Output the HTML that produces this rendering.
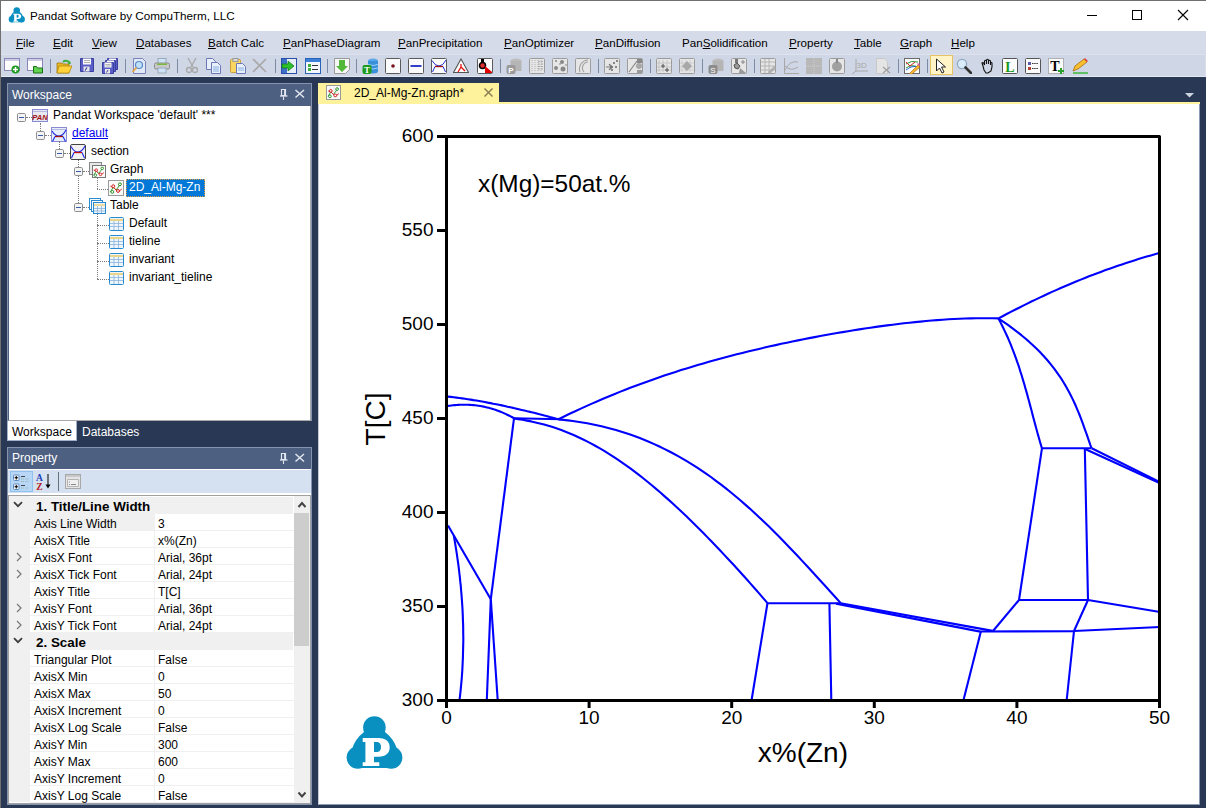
<!DOCTYPE html>
<html><head><meta charset="utf-8">
<style>
*{box-sizing:border-box}
html,body{margin:0;padding:0}
body{width:1206px;height:808px;position:relative;overflow:hidden;background:#293955;font-family:"Liberation Sans",sans-serif;font-size:12px;color:#000}
.a{position:absolute}
.t{position:absolute;white-space:nowrap;line-height:14px}
.mi{position:absolute;top:37px;white-space:nowrap;font-size:11.6px;line-height:12px;color:#000}
.mi u{text-decoration:underline;text-underline-offset:1px}
</style></head><body>
<!-- window frame -->
<div class="a" style="left:0;top:0;width:1206px;height:31px;background:#fff;border-top:1px solid #6f6f6f"></div>
<div class="a" style="left:0;top:0;width:1px;height:808px;background:#707070"></div>
<!-- title -->

<div class="t" style="left:30px;top:9px;font-size:11.7px;color:#000">Pandat Software by CompuTherm, LLC</div>
<!-- window buttons -->
<div class="a" style="left:1087px;top:15px;width:10px;height:1px;background:#000"></div>
<div class="a" style="left:1132px;top:10px;width:10px;height:10px;border:1px solid #000"></div>
<svg class="a" style="left:1177px;top:9px" width="12" height="12"><path d="M1 1 L11 11 M11 1 L1 11" stroke="#000" stroke-width="1.1"/></svg>

<!-- menu bar -->
<div class="a" style="left:1px;top:31px;width:1205px;height:23px;background:#d6dbe9"></div>
<div class="mi" style="left:16px"><u>F</u>ile</div>
<div class="mi" style="left:53px"><u>E</u>dit</div>
<div class="mi" style="left:92px"><u>V</u>iew</div>
<div class="mi" style="left:136px"><u>D</u>atabases</div>
<div class="mi" style="left:208px"><u>B</u>atch Calc</div>
<div class="mi" style="left:283px"><u>P</u>anPhaseDiagram</div>
<div class="mi" style="left:398px"><u>P</u>anPrecipitation</div>
<div class="mi" style="left:504px"><u>P</u>anOptimizer</div>
<div class="mi" style="left:595px"><u>P</u>anDiffusion</div>
<div class="mi" style="left:682px">Pan<u>S</u>olidification</div>
<div class="mi" style="left:789px"><u>P</u>roperty</div>
<div class="mi" style="left:854px"><u>T</u>able</div>
<div class="mi" style="left:900px"><u>G</u>raph</div>
<div class="mi" style="left:951px"><u>H</u>elp</div>

<!-- toolbar -->
<div class="a" style="left:1px;top:54px;width:1205px;height:23px;background:#cfd6e5;border-top:1px solid #dde2ee;border-bottom:1px solid #e4e8f1;border-right:1px solid #d8dde9"></div>
<svg class="a" style="left:4px;top:58px" width="16" height="16" viewBox="0 0 16 16"><rect x="0.5" y="0.5" width="15" height="12" fill="#fdfdfd" stroke="#8a86b8"/><rect x="1" y="1" width="14" height="2" fill="#cfcce6"/><circle cx="11.5" cy="11.5" r="4" fill="#1c9a1c"/><path d="M11.5 9v5M9 11.5h5" stroke="#fff" stroke-width="1.5"/></svg>
<svg class="a" style="left:27px;top:58px" width="16" height="16" viewBox="0 0 16 16"><rect x="0.5" y="0.5" width="15" height="12" fill="#fdfdfd" stroke="#8a86b8"/><rect x="1" y="1" width="14" height="2" fill="#cfcce6"/><path d="M6.5 8.5h3l1 1.5h5v5h-9z" fill="#62d050" stroke="#167016" stroke-width="1"/></svg>
<div class="a" style="left:50px;top:59px;width:1px;height:14px;background:#7d8aa5"></div>
<svg class="a" style="left:56px;top:58px" width="16" height="16" viewBox="0 0 16 16"><path d="M1 5h5l1 1h6v9H1z" fill="#e8b420" stroke="#a07a10" stroke-width="0.8"/><path d="M3 8h13l-3 7H1z" fill="#ffd23c" stroke="#b08a12" stroke-width="0.8"/><path d="M7 4a4 3 0 0 1 7 1" fill="none" stroke="#3cae3c" stroke-width="2"/><path d="M13 3l2 3-3 0z" fill="#3cae3c"/></svg>
<svg class="a" style="left:80px;top:58px" width="15" height="15" viewBox="0 0 15 15"><path d="M0.5 0.5h13v13h-13z" fill="#5a5fc8" stroke="#3a3e9e"/><rect x="3" y="0.5" width="8" height="6" fill="#fafafa"/><path d="M4 2.5h6M4 4.5h6" stroke="#a0a0a0" stroke-width="0.8"/><rect x="3.5" y="8.5" width="6" height="5" fill="#e8e8e8"/><path d="M5 12.5l2-3" stroke="#3a3e9e" stroke-width="1.2"/></svg>
<svg class="a" style="left:102px;top:58px" width="16" height="16" viewBox="0 0 16 16"><path d="M5.5 0.5h10v11h-10z" fill="#5a5fc8" stroke="#3a3e9e"/><rect x="7" y="0.5" width="7" height="3" fill="#fafafa"/><path d="M3.5 2.5h10v11h-10z" fill="#5a5fc8" stroke="#3a3e9e"/><rect x="5" y="2.5" width="7" height="3" fill="#fafafa"/><path d="M0.5 4.5h11v11h-11z" fill="#5a5fc8" stroke="#3a3e9e"/><rect x="2.5" y="4.5" width="7" height="5" fill="#fafafa"/><path d="M3.5 6.5h5M3.5 8h5" stroke="#a0a0a0" stroke-width="0.8"/><rect x="3" y="11" width="5" height="4.5" fill="#e8e8e8"/><path d="M4.5 14.5l1.5-2.5" stroke="#3a3e9e"/></svg>
<div class="a" style="left:125px;top:59px;width:1px;height:14px;background:#7d8aa5"></div>
<svg class="a" style="left:132px;top:58px" width="16" height="16" viewBox="0 0 16 16"><path d="M1.5 0.5h9l3 3v12h-12z" fill="#dfe9f8" stroke="#7a82b8"/><circle cx="7" cy="7" r="3.5" fill="#bfe0f8" stroke="#5a8ac8" stroke-width="1.2"/><path d="M4.5 9.5L0.5 14" stroke="#e8a040" stroke-width="1.8"/></svg>
<svg class="a" style="left:154px;top:58px" width="16" height="16" viewBox="0 0 16 16"><rect x="4" y="0.5" width="8" height="5" fill="#cfe3f8" stroke="#9ab"/><rect x="0.5" y="5" width="15" height="6" rx="1.5" fill="#c8c8c8" stroke="#8c8c8c"/><rect x="3" y="5.5" width="10" height="1.5" fill="#78b83a"/><rect x="4" y="10" width="8" height="5" fill="#cfe3f8" stroke="#9ab"/></svg>
<div class="a" style="left:177px;top:59px;width:1px;height:14px;background:#7d8aa5"></div>
<svg class="a" style="left:185px;top:58px" width="14" height="16" viewBox="0 0 14 16"><path d="M3 0l5 9M11 0L6 9" stroke="#a8a8a8" stroke-width="1.3"/><circle cx="4" cy="12" r="2.5" fill="none" stroke="#a8a8a8" stroke-width="1.3"/><circle cx="10" cy="12" r="2.5" fill="none" stroke="#a8a8a8" stroke-width="1.3"/></svg>
<svg class="a" style="left:206px;top:58px" width="16" height="16" viewBox="0 0 16 16"><path d="M0.5 0.5h6l3 3v8h-9z" fill="#e8f0fb" stroke="#6a78b8"/><path d="M5.5 4.5h6l3 3v8h-9z" fill="#e8f0fb" stroke="#6a78b8"/><path d="M7 9h6M7 11h6M7 13h6" stroke="#8ab0e0"/></svg>
<svg class="a" style="left:230px;top:58px" width="16" height="16" viewBox="0 0 16 16"><rect x="0.5" y="1.5" width="10" height="13" rx="1" fill="#fbd660" stroke="#c8a040"/><rect x="3" y="0.5" width="5" height="3" fill="#ddd" stroke="#999"/><path d="M6.5 5.5h6l3 3v7h-9z" fill="#e8f0fb" stroke="#6a78b8"/><path d="M8 10h6M8 12h6" stroke="#8ab0e0"/></svg>
<svg class="a" style="left:252px;top:58px" width="15" height="16" viewBox="0 0 15 16"><path d="M1 1l13 13M14 1L1 14" stroke="#a8a8a8" stroke-width="1.6"/></svg>
<div class="a" style="left:275px;top:59px;width:1px;height:14px;background:#7d8aa5"></div>
<svg class="a" style="left:281px;top:58px" width="16" height="16" viewBox="0 0 16 16"><rect x="0.5" y="0.5" width="15" height="15" fill="#e8eef8" stroke="#2a4ea8"/><rect x="1" y="1" width="5" height="14" fill="#3a70c8"/><path d="M1 6h6V3l6 5-6 5v-3H1z" fill="#2cc02c" stroke="#107010" stroke-width="0.7"/></svg>
<svg class="a" style="left:305px;top:58px" width="16" height="16" viewBox="0 0 16 16"><rect x="0.5" y="0.5" width="15" height="15" fill="#f4f8fc" stroke="#2a62b8"/><rect x="1" y="1" width="14" height="3" fill="#3a80d8"/><rect x="3" y="6" width="3" height="3" fill="#3cae3c"/><rect x="3" y="10" width="3" height="3" fill="#3cae3c"/><path d="M7 7.5h6M7 11.5h6" stroke="#333" stroke-width="1.2"/></svg>
<div class="a" style="left:327px;top:59px;width:1px;height:14px;background:#7d8aa5"></div>
<svg class="a" style="left:334px;top:58px" width="16" height="16" viewBox="0 0 16 16"><path d="M0.5 0.5h15v11l-4 4h-11z" fill="#f6f6f6" stroke="#999"/><path d="M5 2h6v6h3l-6 6-6-6h3z" fill="#52b83a"/></svg>
<div class="a" style="left:356px;top:59px;width:1px;height:14px;background:#7d8aa5"></div>
<svg class="a" style="left:362px;top:58px" width="16" height="16" viewBox="0 0 16 16"><ellipse cx="11" cy="3" rx="5" ry="2.5" fill="#5aa8e8"/><rect x="6" y="3" width="10" height="10" fill="#3a90d8"/><ellipse cx="11" cy="13" rx="5" ry="2.5" fill="#3a90d8"/><path d="M6 6.5q5 2 10 0M6 10q5 2 10 0" stroke="#9ad0f8" fill="none"/><rect x="0.5" y="7" width="9" height="9" rx="2" fill="#1a9a1a"/><text x="5" y="15" font-family="Liberation Serif" font-weight="bold" font-size="9" fill="#fff" text-anchor="middle">T</text></svg>
<svg class="a" style="left:385px;top:58px" width="16" height="16" viewBox="0 0 16 16"><rect x="0.5" y="0.5" width="15" height="15" rx="1" fill="#fbfbfb" stroke="#5a5a5a"/><circle cx="8" cy="8" r="1.8" fill="#7a1020"/></svg>
<svg class="a" style="left:408px;top:58px" width="16" height="16" viewBox="0 0 16 16"><rect x="0.5" y="0.5" width="15" height="15" rx="1" fill="#fbfbfb" stroke="#5a5a5a"/><rect x="2.5" y="7" width="11" height="2" fill="#3040c8"/></svg>
<svg class="a" style="left:431px;top:58px" width="16" height="16" viewBox="0 0 16 16"><rect x="0.5" y="0.5" width="15" height="15" rx="1" fill="#fbfbfb" stroke="#5a5a5a"/><path d="M1 2.5Q4 8 8 8Q12 8 15 2M4 8.5L1.5 14M12 8.5L14.5 14" fill="none" stroke="#2030d0" stroke-width="1"/><path d="M4 8.5h8" stroke="#a01010" stroke-width="1.3"/></svg>
<svg class="a" style="left:453px;top:58px" width="16" height="16" viewBox="0 0 16 16"><path d="M8 1L15.5 14.5h-15z" fill="#fdfdfd" stroke="#555" stroke-width="1.1"/><path d="M8 9l-3 5M8 9l4 4M8 9V6" stroke="#e01010" stroke-width="1.3"/></svg>
<svg class="a" style="left:477px;top:58px" width="16" height="16" viewBox="0 0 16 16"><rect x="0.5" y="0.5" width="15" height="15" rx="1" fill="#fbfbfb" stroke="#5a5a5a"/><rect x="4" y="1" width="3" height="4" fill="#000"/><circle cx="5.5" cy="7.5" r="3" fill="#e03030" stroke="#000" stroke-width="1.5"/><path d="M8 8l7 6v1H8z" fill="#e00000"/></svg>
<div class="a" style="left:500px;top:59px;width:1px;height:14px;background:#7d8aa5"></div>
<svg class="a" style="left:506px;top:58px" width="16" height="16" viewBox="0 0 16 16"><ellipse cx="10" cy="3" rx="5.5" ry="2.5" fill="#bdbdbd"/><rect x="4.5" y="3" width="11" height="10" fill="#b5b5b5"/><rect x="0.5" y="7" width="9" height="9" rx="2" fill="#9a9a9a"/><text x="5" y="15" font-family="Liberation Sans" font-weight="bold" font-size="8" fill="#fff" text-anchor="middle">P</text></svg>
<svg class="a" style="left:529px;top:58px" width="16" height="16" viewBox="0 0 16 16"><rect x="0.5" y="0.5" width="15" height="15" rx="1" fill="#e6e6e6" stroke="#9c9c9c"/><path d="M3 2v12M6 2v12M9 2v12M12 2v12" stroke="#b0b0b0" stroke-dasharray="1 1"/><path d="M10 3v10M13 3v10" stroke="#707070" stroke-dasharray="1 1.5"/></svg>
<svg class="a" style="left:552px;top:58px" width="16" height="16" viewBox="0 0 16 16"><rect x="0.5" y="0.5" width="15" height="15" rx="1" fill="#e6e6e6" stroke="#9c9c9c"/><circle cx="10" cy="4" r="2" fill="#888"/><circle cx="4" cy="10" r="2" fill="#888"/><circle cx="11" cy="11" r="2.5" fill="#888"/><path d="M3 3h2M4 2v2M13 7h2M7 6h2" stroke="#888"/></svg>
<svg class="a" style="left:575px;top:58px" width="16" height="16" viewBox="0 0 16 16"><rect x="0.5" y="0.5" width="15" height="15" rx="1" fill="#e6e6e6" stroke="#9c9c9c"/><path d="M13 2A9 9 0 0 0 5 14M13 4A6 6 0 0 0 9 14" fill="none" stroke="#a0a0a0" stroke-width="1.1"/></svg>
<div class="a" style="left:598px;top:59px;width:1px;height:14px;background:#7d8aa5"></div>
<svg class="a" style="left:604px;top:58px" width="16" height="16" viewBox="0 0 16 16"><rect x="0.5" y="0.5" width="15" height="15" rx="1" fill="#e6e6e6" stroke="#9c9c9c"/><path d="M2 9h5l-2-3 4 3-4 3 2-3" fill="#777" stroke="#777"/><rect x="9" y="4" width="2" height="2" fill="#888"/><rect x="12" y="2" width="2" height="2" fill="#888"/><rect x="11" y="8" width="2" height="2" fill="#888"/><rect x="7" y="11" width="2" height="2" fill="#888"/></svg>
<svg class="a" style="left:627px;top:58px" width="16" height="16" viewBox="0 0 16 16"><rect x="0.5" y="0.5" width="15" height="15" rx="1" fill="#e6e6e6" stroke="#9c9c9c"/><rect x="10" y="1" width="5" height="4" fill="#888"/><circle cx="12" cy="8" r="3" fill="#a8a8a8"/><path d="M2 14L10 3" stroke="#888" stroke-width="1.2"/><rect x="10" y="12" width="5" height="3" fill="#999"/></svg>
<div class="a" style="left:650px;top:59px;width:1px;height:14px;background:#7d8aa5"></div>
<svg class="a" style="left:656px;top:58px" width="16" height="16" viewBox="0 0 16 16"><rect x="0.5" y="0.5" width="15" height="15" rx="1" fill="#e6e6e6" stroke="#9c9c9c"/><path d="M3 2v12M7 2v12M11 2v12M1 5h14M1 9h14M1 12h14" stroke="#c4c4c4"/><path d="M7 6v4M5 8h4M11 10v4M9 12h4" stroke="#555"/></svg>
<svg class="a" style="left:679px;top:58px" width="16" height="16" viewBox="0 0 16 16"><rect x="0.5" y="0.5" width="15" height="15" rx="1" fill="#e6e6e6" stroke="#9c9c9c"/><path d="M3 2v12M7 2v12M11 2v12M1 5h14M1 9h14M1 12h14" stroke="#cdcdcd"/><path d="M8 3l5 5-5 5-5-5z" fill="#a8a8a8"/></svg>
<div class="a" style="left:702px;top:59px;width:1px;height:14px;background:#7d8aa5"></div>
<svg class="a" style="left:708px;top:58px" width="16" height="16" viewBox="0 0 16 16"><ellipse cx="10" cy="3" rx="5.5" ry="2.5" fill="#bdbdbd"/><rect x="4.5" y="3" width="11" height="10" fill="#b5b5b5"/><rect x="0.5" y="7" width="9" height="9" rx="2" fill="#8c8c8c"/><text x="5" y="15" font-family="Liberation Sans" font-size="8" fill="#fff" text-anchor="middle">S</text></svg>
<svg class="a" style="left:731px;top:58px" width="16" height="16" viewBox="0 0 16 16"><rect x="0.5" y="0.5" width="15" height="15" rx="1" fill="#e6e6e6" stroke="#9c9c9c"/><rect x="4" y="1" width="3" height="4" fill="#777"/><path d="M3 7l3-2 3 3-2 3-3-1z" fill="#999" stroke="#555"/><path d="M9 10l6 5H8z" fill="#999"/><path d="M12 2v4M10 4h4" stroke="#888"/></svg>
<div class="a" style="left:754px;top:59px;width:1px;height:14px;background:#7d8aa5"></div>
<svg class="a" style="left:760px;top:58px" width="16" height="16" viewBox="0 0 16 16"><rect x="0.5" y="0.5" width="15" height="15" rx="1" fill="#e6e6e6" stroke="#9c9c9c"/><path d="M1 4h14M1 8h14M1 12h14M5 1v14M9 1v14" stroke="#b4b4b4"/><path d="M8 14l6-6 2 2-6 6z" fill="#b0b0b0"/></svg>
<svg class="a" style="left:783px;top:58px" width="16" height="16" viewBox="0 0 16 16"><path d="M1.5 0v15.5H16" fill="none" stroke="#a8a8a8"/><path d="M2 12Q7 2 15 4M2 8Q8 14 15 9" fill="none" stroke="#a8a8a8"/></svg>
<svg class="a" style="left:806px;top:58px" width="16" height="16" viewBox="0 0 16 16"><rect x="0" y="0" width="16" height="16" fill="#b8b8b8"/><path d="M8 0v16M0 8h16" stroke="#d0d0d0" stroke-dasharray="1 1"/></svg>
<svg class="a" style="left:829px;top:58px" width="16" height="16" viewBox="0 0 16 16"><rect x="0.5" y="0.5" width="15" height="15" rx="1" fill="#e6e6e6" stroke="#9c9c9c"/><circle cx="8" cy="8.5" r="5" fill="#a0a0a0"/><path d="M8 1v4" stroke="#888" stroke-width="2"/></svg>
<svg class="a" style="left:852px;top:58px" width="16" height="16" viewBox="0 0 16 16"><path d="M4 1v12L0 16M4 13h12" fill="none" stroke="#a8a8a8"/><text x="4.5" y="10" font-family="Liberation Sans" font-size="8" fill="#a8a8a8">3D</text></svg>
<svg class="a" style="left:875px;top:58px" width="16" height="16" viewBox="0 0 16 16"><path d="M1.5 0.5h8l3 3v12h-11z" fill="#e4e4e4" stroke="#c8c8c8"/><path d="M8 9l7 6M15 9l-7 6" stroke="#a0a0a0" stroke-width="1.3"/></svg>
<div class="a" style="left:898px;top:59px;width:1px;height:14px;background:#7d8aa5"></div>
<svg class="a" style="left:904px;top:58px" width="16" height="16" viewBox="0 0 16 16"><rect x="0.5" y="0.5" width="15" height="15" fill="#fcfcfc" stroke="#6a6a6a"/><path d="M2 6q5-4 12-2M2 10q5-4 12-1" fill="none" stroke="#2a9a2a"/><path d="M2 4l4 4 5-4" fill="none" stroke="#d02020"/><path d="M2 12q6-5 12-3" fill="none" stroke="#2a6ad0"/><path d="M6 15l8-8 2 2-8 7-3 1z" fill="#f8b830" stroke="#a06010" stroke-width="0.6"/><path d="M13 6l2 2 1-1-2-2z" fill="#e060a0"/></svg>
<div class="a" style="left:927px;top:59px;width:1px;height:14px;background:#7d8aa5"></div>
<div class="a" style="left:930px;top:55px;width:23px;height:20px;background:#fff3c8;border:1px solid #e5c365"></div>
<svg class="a" style="left:934px;top:58px" width="16" height="16" viewBox="0 0 16 16"><path d="M2.5 1v12l3-3 2.5 5 2-1-2.5-5h4z" fill="#fff" stroke="#222" stroke-width="1"/></svg>
<svg class="a" style="left:956px;top:58px" width="16" height="16" viewBox="0 0 16 16"><circle cx="6" cy="6" r="4.6" fill="#d8ecfa" stroke="#90a8c0" stroke-width="1.3"/><path d="M9.5 9.5L15 15" stroke="#333" stroke-width="2.6" stroke-linecap="round"/></svg>
<svg class="a" style="left:980px;top:58px" width="16" height="16" viewBox="0 0 16 16"><path d="M3 8l-1-3q0-1 1.5 0l1 2V3q1-1.5 2 0v3V2q1-1.5 2 0v4V3q1-1.5 2 0v4V5q1-1 1.5 0v4l-1 4-3 2H6l-2-3z" fill="none" stroke="#111" stroke-width="1.1"/></svg>
<svg class="a" style="left:1002px;top:58px" width="16" height="16" viewBox="0 0 16 16"><rect x="0.5" y="0.5" width="15" height="15" rx="1" fill="#fcfcfc" stroke="#555"/><text x="8" y="14" font-family="Liberation Serif" font-weight="bold" font-size="14" fill="#1a9a1a" text-anchor="middle">L</text></svg>
<svg class="a" style="left:1025px;top:58px" width="16" height="16" viewBox="0 0 16 16"><rect x="0.5" y="0.5" width="15" height="15" rx="1" fill="#fbfbfb" stroke="#555"/><rect x="3" y="4" width="3" height="3" fill="#5a5aa8"/><rect x="3" y="9" width="3" height="3" fill="#b04030"/><path d="M7 5.5h6M7 10.5h6" stroke="#333" stroke-dasharray="1.5 0.7"/></svg>
<svg class="a" style="left:1048px;top:58px" width="16" height="16" viewBox="0 0 16 16"><rect x="0.5" y="0.5" width="15" height="15" fill="#fbfbfb" stroke="#777" stroke-dasharray="1 1"/><text x="7" y="13" font-family="Liberation Serif" font-weight="bold" font-size="14" fill="#000" text-anchor="middle">T</text><path d="M13 10v6M10 13h6" stroke="#2aa02a" stroke-width="2"/></svg>
<svg class="a" style="left:1072px;top:58px" width="16" height="16" viewBox="0 0 16 16"><path d="M1 13l2-5 9-7 3 3-9 7z" fill="#f8c030" stroke="#a86a10" stroke-width="0.8"/><path d="M12 1l3 3 1-1-3-3z" fill="#e04040"/><path d="M1 15h15" stroke="#3cb83c" stroke-width="1.5"/></svg>

<!-- workspace panel -->
<div class="a" style="left:7px;top:83px;width:305px;height:338px;background:#4d6082;border:1px solid #8592b0"></div>
<div class="t" style="left:12px;top:88px;color:#fff">Workspace</div>
<svg class="a" style="left:279px;top:88px" width="28" height="13" viewBox="0 0 28 13"><path d="M2.5 1.5h4v6h-4z" fill="none" stroke="#e2e6ee" stroke-width="1.2"/><path d="M6 1v7" stroke="#e2e6ee" stroke-width="1.8"/><path d="M1 8h7.5" stroke="#e2e6ee" stroke-width="1.3"/><path d="M4.5 8.5v3.5" stroke="#e2e6ee" stroke-width="1.1"/><path d="M16.5 2l8.5 7.5M25 2l-8.5 7.5" stroke="#e2e6ee" stroke-width="1.5"/></svg>
<div class="a" style="left:9px;top:106px;width:302px;height:315px;background:#fff;border-right:1px solid #a8a8a8;border-bottom:1px solid #a8a8a8"></div>
<svg class="a" style="left:17px;top:113px" width="9" height="9" viewBox="0 0 9 9"><rect x="0.5" y="0.5" width="8" height="8" rx="1.2" fill="#f4f4f4" stroke="#8e8e8e"/><path d="M2 4.5h5" stroke="#3a5aa8" stroke-width="1"/></svg>
<div class="a" style="left:26px;top:117px;width:6px;height:0;border-top:1px dotted #7a7a7a"></div>
<svg class="a" style="left:32px;top:109px" width="16" height="13" viewBox="0 0 16 13"><rect x="0.5" y="0.5" width="15" height="12" fill="#e8e8f0" stroke="#8a8ad0"/><path d="M1 2.5h14" stroke="#b8b8e0"/><text x="8" y="10.5" font-family="Liberation Sans" font-weight="bold" font-style="italic" font-size="7.5" fill="#a01010" text-anchor="middle">PAN</text></svg>
<div class="t" style="left:53px;top:108px;">Pandat Workspace 'default' ***</div>
<div class="a" style="left:40px;top:123px;width:0;height:8px;border-left:1px dotted #7a7a7a"></div>
<svg class="a" style="left:36px;top:131px" width="9" height="9" viewBox="0 0 9 9"><rect x="0.5" y="0.5" width="8" height="8" rx="1.2" fill="#f4f4f4" stroke="#8e8e8e"/><path d="M2 4.5h5" stroke="#3a5aa8" stroke-width="1"/></svg>
<div class="a" style="left:45px;top:135px;width:6px;height:0;border-top:1px dotted #7a7a7a"></div>
<svg class="a" style="left:51px;top:127px" width="16" height="15" viewBox="0 0 16 15"><rect x="0.5" y="0.5" width="15" height="14" fill="#e4eefa" stroke="#8a8ad0"/><path d="M1 2.5h14" stroke="#b8b8e0"/><path d="M1 4Q4 9 8 9Q12 9 15 3M4 9.5L1.5 14.5M12 9.5L14.5 14.5" fill="none" stroke="#1828e8" stroke-width="1.1"/><path d="M4 9.5h8" stroke="#a01010" stroke-width="1.3"/></svg>
<div class="t" style="left:72px;top:126px;color:#0000ee;text-decoration:underline">default</div>
<div class="a" style="left:59px;top:141px;width:0;height:8px;border-left:1px dotted #7a7a7a"></div>
<svg class="a" style="left:55px;top:149px" width="9" height="9" viewBox="0 0 9 9"><rect x="0.5" y="0.5" width="8" height="8" rx="1.2" fill="#f4f4f4" stroke="#8e8e8e"/><path d="M2 4.5h5" stroke="#3a5aa8" stroke-width="1"/></svg>
<div class="a" style="left:64px;top:153px;width:6px;height:0;border-top:1px dotted #7a7a7a"></div>
<svg class="a" style="left:70px;top:144px" width="16" height="16" viewBox="0 0 16 16"><rect x="0.5" y="0.5" width="15" height="15" rx="1.5" fill="#f2f2f2" stroke="#444"/><path d="M1 2.5Q4 8 8 8Q12 8 15 2M4 8.5L1.5 14M12 8.5L14.5 14" fill="none" stroke="#1828e8" stroke-width="1.1"/><path d="M4 8.5h8" stroke="#c01010" stroke-width="1.3"/></svg>
<div class="t" style="left:91px;top:144px;">section</div>
<div class="a" style="left:78px;top:160px;width:0;height:43px;border-left:1px dotted #7a7a7a"></div>
<svg class="a" style="left:74px;top:167px" width="9" height="9" viewBox="0 0 9 9"><rect x="0.5" y="0.5" width="8" height="8" rx="1.2" fill="#f4f4f4" stroke="#8e8e8e"/><path d="M2 4.5h5" stroke="#3a5aa8" stroke-width="1"/></svg>
<div class="a" style="left:83px;top:171px;width:6px;height:0;border-top:1px dotted #7a7a7a"></div>
<svg class="a" style="left:89px;top:162px" width="17" height="16" viewBox="0 0 17 16"><rect x="0.5" y="0.5" width="12" height="12" fill="#e8e8e8" stroke="#888"/><rect x="3.5" y="3.5" width="13" height="12" fill="#fafafa" stroke="#777"/><g transform="translate(3 3) scale(0.85)"><path d="M2 12l3-5 3 3 5-7" fill="none" stroke="#2a9a2a" stroke-width="1"/><path d="M2 6l4 2 4 4 4-3" fill="none" stroke="#d02020" stroke-width="1"/><circle cx="4" cy="12" r="1.5" fill="#fff" stroke="#1a8a1a"/><circle cx="12" cy="4" r="1.5" fill="#fff" stroke="#1a8a1a"/><circle cx="5" cy="6" r="1.5" fill="#fff" stroke="#d01010"/><circle cx="10" cy="11" r="1.5" fill="#fff" stroke="#d01010"/></g></svg>
<div class="t" style="left:110px;top:162px;">Graph</div>
<div class="a" style="left:97px;top:178px;width:0;height:11px;border-left:1px dotted #7a7a7a"></div>
<div class="a" style="left:97px;top:189px;width:11px;height:0;border-top:1px dotted #7a7a7a"></div>
<svg class="a" style="left:108px;top:180px" width="16" height="16" viewBox="0 0 16 16"><rect x="0.5" y="0.5" width="15" height="15" fill="#fafafa" stroke="#9a9a9a"/><g transform="translate(0.5 0.5) scale(0.95)"><path d="M2 12l3-5 3 3 5-7" fill="none" stroke="#2a9a2a" stroke-width="1"/><path d="M2 6l4 2 4 4 4-3" fill="none" stroke="#d02020" stroke-width="1"/><circle cx="4" cy="12" r="1.5" fill="#fff" stroke="#1a8a1a"/><circle cx="12" cy="4" r="1.5" fill="#fff" stroke="#1a8a1a"/><circle cx="5" cy="6" r="1.5" fill="#fff" stroke="#d01010"/><circle cx="10" cy="11" r="1.5" fill="#fff" stroke="#d01010"/></g></svg>
<div class="a" style="left:126px;top:179px;width:79px;height:18px;background:#0078d7;border:1px dotted #e0a040"></div>
<div class="t" style="left:129px;top:180px;color:#fff">2D_Al-Mg-Zn</div>
<svg class="a" style="left:74px;top:203px" width="9" height="9" viewBox="0 0 9 9"><rect x="0.5" y="0.5" width="8" height="8" rx="1.2" fill="#f4f4f4" stroke="#8e8e8e"/><path d="M2 4.5h5" stroke="#3a5aa8" stroke-width="1"/></svg>
<div class="a" style="left:83px;top:207px;width:6px;height:0;border-top:1px dotted #7a7a7a"></div>
<svg class="a" style="left:89px;top:198px" width="17" height="16" viewBox="0 0 17 16"><rect x="0.5" y="0.5" width="11" height="11" fill="#fff" stroke="#2a8ad0"/><rect x="2.5" y="2.5" width="11" height="11" fill="#fff" stroke="#2a8ad0"/><rect x="4.5" y="4.5" width="12" height="11" fill="#eef6fc" stroke="#2a8ad0"/><path d="M5 7h11" stroke="#e8c040"/><path d="M8.5 8v7M12.5 8v7M5 10.5h11M5 13h11" stroke="#8ab4dc" stroke-width="0.8"/></svg>
<div class="t" style="left:110px;top:198px;">Table</div>
<div class="a" style="left:97px;top:214px;width:0;height:65px;border-left:1px dotted #7a7a7a"></div>
<div class="a" style="left:97px;top:225px;width:12px;height:0;border-top:1px dotted #7a7a7a"></div>
<svg class="a" style="left:109px;top:217px" width="15" height="14" viewBox="0 0 15 14"><rect x="0.5" y="0.5" width="14" height="13" rx="1" fill="#eef6fc" stroke="#2a8ad0"/><path d="M1 3h13" stroke="#e8c040" stroke-width="1.2"/><path d="M5 4v9M9.5 4v9M1 6.5h13M1 9.5h13" stroke="#8ab4dc" stroke-width="0.8"/></svg>
<div class="t" style="left:129px;top:216px;">Default</div>
<div class="a" style="left:97px;top:243px;width:12px;height:0;border-top:1px dotted #7a7a7a"></div>
<svg class="a" style="left:109px;top:235px" width="15" height="14" viewBox="0 0 15 14"><rect x="0.5" y="0.5" width="14" height="13" rx="1" fill="#eef6fc" stroke="#2a8ad0"/><path d="M1 3h13" stroke="#e8c040" stroke-width="1.2"/><path d="M5 4v9M9.5 4v9M1 6.5h13M1 9.5h13" stroke="#8ab4dc" stroke-width="0.8"/></svg>
<div class="t" style="left:129px;top:234px;">tieline</div>
<div class="a" style="left:97px;top:261px;width:12px;height:0;border-top:1px dotted #7a7a7a"></div>
<svg class="a" style="left:109px;top:253px" width="15" height="14" viewBox="0 0 15 14"><rect x="0.5" y="0.5" width="14" height="13" rx="1" fill="#eef6fc" stroke="#2a8ad0"/><path d="M1 3h13" stroke="#e8c040" stroke-width="1.2"/><path d="M5 4v9M9.5 4v9M1 6.5h13M1 9.5h13" stroke="#8ab4dc" stroke-width="0.8"/></svg>
<div class="t" style="left:129px;top:252px;">invariant</div>
<div class="a" style="left:97px;top:279px;width:12px;height:0;border-top:1px dotted #7a7a7a"></div>
<svg class="a" style="left:109px;top:271px" width="15" height="14" viewBox="0 0 15 14"><rect x="0.5" y="0.5" width="14" height="13" rx="1" fill="#eef6fc" stroke="#2a8ad0"/><path d="M1 3h13" stroke="#e8c040" stroke-width="1.2"/><path d="M5 4v9M9.5 4v9M1 6.5h13M1 9.5h13" stroke="#8ab4dc" stroke-width="0.8"/></svg>
<div class="t" style="left:129px;top:270px;">invariant_tieline</div>
<!-- bottom tabs -->
<div class="a" style="left:7px;top:421px;width:70px;height:20px;background:#fff;border-left:1px solid #a3aecb;border-bottom:1px solid #a3aecb;border-right:1px solid #a3aecb"></div>
<div class="t" style="left:12px;top:425px;color:#000">Workspace</div>
<div class="t" style="left:82px;top:425px;color:#fff">Databases</div>

<!-- property panel -->
<div class="a" style="left:7px;top:447px;width:305px;height:358px;background:#4d6082;border:1px solid #8592b0"></div>
<div class="t" style="left:12px;top:451px;color:#fff">Property</div>
<svg class="a" style="left:279px;top:452px" width="28" height="13" viewBox="0 0 28 13"><path d="M2.5 1.5h4v6h-4z" fill="none" stroke="#e2e6ee" stroke-width="1.2"/><path d="M6 1v7" stroke="#e2e6ee" stroke-width="1.8"/><path d="M1 8h7.5" stroke="#e2e6ee" stroke-width="1.3"/><path d="M4.5 8.5v3.5" stroke="#e2e6ee" stroke-width="1.1"/><path d="M16.5 2l8.5 7.5M25 2l-8.5 7.5" stroke="#e2e6ee" stroke-width="1.5"/></svg>
<div class="a" style="left:8px;top:469px;width:303px;height:24px;background:#d5e1f0"></div>
<div class="a" style="left:8px;top:493px;width:303px;height:2px;background:#fff"></div>
<div class="a" style="left:8px;top:495px;width:303px;height:309px;background:#fff;border:1px solid #a0a0a0"></div>
<div class="a" style="left:8px;top:469px;width:303px;height:1px;background:#fff"></div>
<div class="a" style="left:10px;top:471px;width:23px;height:21px;background:#b8d6f6;border:1px solid #90c0ee"></div>
<svg class="a" style="left:13px;top:474px" width="17" height="16" viewBox="0 0 17 16"><rect x="0.5" y="1" width="5.5" height="5.5" rx="1" fill="#fff" stroke="#5a8ac0"/><path d="M1.5 3.7h3.5M3.25 2v3.5" stroke="#000" stroke-width="1.1"/><rect x="0.5" y="10" width="5.5" height="5.5" rx="1" fill="#fff" stroke="#5a8ac0"/><path d="M1.5 12.7h3.5M3.25 11v3.5" stroke="#000" stroke-width="1.1"/><path d="M8 2.5h4M8 11.5h4" stroke="#444" stroke-width="1.2"/><path d="M8 5h3M12.5 5h3M8 7.5h3M12.5 7.5h3M8 14h3M12.5 14h3" stroke="#8aa890" stroke-width="0.8" stroke-dasharray="1 0.8"/></svg>
<svg class="a" style="left:35px;top:473px" width="18" height="18" viewBox="0 0 18 18"><text x="4.5" y="8" font-family="Liberation Serif" font-weight="bold" font-size="9.5" fill="#2040b8" text-anchor="middle">A</text><text x="4.5" y="17" font-family="Liberation Serif" font-weight="bold" font-size="9.5" fill="#b82020" text-anchor="middle">Z</text><path d="M13 1v13" stroke="#000" stroke-width="1"/><path d="M10.5 11.5l2.5 4 2.5-4z" fill="#000"/></svg>
<div class="a" style="left:58px;top:472px;width:1px;height:19px;background:#6a7078"></div>
<svg class="a" style="left:65px;top:474px" width="16" height="15" viewBox="0 0 16 15"><rect x="0.5" y="0.5" width="15" height="14" fill="#e4e4e4" stroke="#a8a8a8"/><rect x="1" y="1" width="14" height="2" fill="#c8c8c8"/><path d="M2.5 5.5h11v7h-11z" fill="#f0f0f0" stroke="#b4b4b4"/><path d="M4 8h1M4 10.5h1M6 10.5h5" stroke="#888"/></svg>
<div class="a" style="left:9px;top:496px;width:21px;height:306px;background:#f0f0f0"></div>
<div class="a" style="left:9px;top:497px;width:284px;height:17px;background:#f0f0f0"></div>
<svg class="a" style="left:13px;top:501px" width="10" height="7" viewBox="0 0 10 7"><path d="M1 1.2l4 4 4-4" fill="none" stroke="#3a3a3a" stroke-width="1.7"/></svg>
<div class="t" style="left:36px;top:500px;font-weight:bold;font-size:13.4px">1. Title/Line Width</div>
<div class="a" style="left:30px;top:514px;width:124px;height:17px;background:#f0f0f0"></div>
<div class="a" style="left:30px;top:530px;width:264px;height:1px;background:#f0f0f0"></div>
<div class="a" style="left:154px;top:514px;width:1px;height:17px;background:#f0f0f0"></div>
<div class="t" style="left:34px;top:517px;">Axis Line Width</div>
<div class="t" style="left:158px;top:517px;">3</div>
<div class="a" style="left:30px;top:547px;width:264px;height:1px;background:#f0f0f0"></div>
<div class="a" style="left:154px;top:531px;width:1px;height:17px;background:#f0f0f0"></div>
<div class="t" style="left:34px;top:534px;">AxisX Title</div>
<div class="t" style="left:158px;top:534px;">x%(Zn)</div>
<div class="a" style="left:30px;top:564px;width:264px;height:1px;background:#f0f0f0"></div>
<div class="a" style="left:154px;top:548px;width:1px;height:17px;background:#f0f0f0"></div>
<svg class="a" style="left:16px;top:552px" width="6" height="10" viewBox="0 0 6 10"><path d="M1 1l4 4-4 4" fill="none" stroke="#777" stroke-width="1.2"/></svg>
<div class="t" style="left:34px;top:551px;">AxisX Font</div>
<div class="t" style="left:158px;top:551px;">Arial, 36pt</div>
<div class="a" style="left:30px;top:581px;width:264px;height:1px;background:#f0f0f0"></div>
<div class="a" style="left:154px;top:565px;width:1px;height:17px;background:#f0f0f0"></div>
<svg class="a" style="left:16px;top:569px" width="6" height="10" viewBox="0 0 6 10"><path d="M1 1l4 4-4 4" fill="none" stroke="#777" stroke-width="1.2"/></svg>
<div class="t" style="left:34px;top:568px;">AxisX Tick Font</div>
<div class="t" style="left:158px;top:568px;">Arial, 24pt</div>
<div class="a" style="left:30px;top:598px;width:264px;height:1px;background:#f0f0f0"></div>
<div class="a" style="left:154px;top:582px;width:1px;height:17px;background:#f0f0f0"></div>
<div class="t" style="left:34px;top:585px;">AxisY Title</div>
<div class="t" style="left:158px;top:585px;">T[C]</div>
<div class="a" style="left:30px;top:615px;width:264px;height:1px;background:#f0f0f0"></div>
<div class="a" style="left:154px;top:599px;width:1px;height:17px;background:#f0f0f0"></div>
<svg class="a" style="left:16px;top:603px" width="6" height="10" viewBox="0 0 6 10"><path d="M1 1l4 4-4 4" fill="none" stroke="#777" stroke-width="1.2"/></svg>
<div class="t" style="left:34px;top:602px;">AxisY Font</div>
<div class="t" style="left:158px;top:602px;">Arial, 36pt</div>
<div class="a" style="left:30px;top:632px;width:264px;height:1px;background:#f0f0f0"></div>
<div class="a" style="left:154px;top:616px;width:1px;height:17px;background:#f0f0f0"></div>
<svg class="a" style="left:16px;top:620px" width="6" height="10" viewBox="0 0 6 10"><path d="M1 1l4 4-4 4" fill="none" stroke="#777" stroke-width="1.2"/></svg>
<div class="t" style="left:34px;top:619px;">AxisY Tick Font</div>
<div class="t" style="left:158px;top:619px;">Arial, 24pt</div>
<div class="a" style="left:9px;top:633px;width:284px;height:17px;background:#f0f0f0"></div>
<svg class="a" style="left:13px;top:637px" width="10" height="7" viewBox="0 0 10 7"><path d="M1 1.2l4 4 4-4" fill="none" stroke="#3a3a3a" stroke-width="1.7"/></svg>
<div class="t" style="left:36px;top:636px;font-weight:bold;font-size:13.4px">2. Scale</div>
<div class="a" style="left:30px;top:666px;width:264px;height:1px;background:#f0f0f0"></div>
<div class="a" style="left:154px;top:650px;width:1px;height:17px;background:#f0f0f0"></div>
<div class="t" style="left:34px;top:653px;">Triangular Plot</div>
<div class="t" style="left:158px;top:653px;">False</div>
<div class="a" style="left:30px;top:683px;width:264px;height:1px;background:#f0f0f0"></div>
<div class="a" style="left:154px;top:667px;width:1px;height:17px;background:#f0f0f0"></div>
<div class="t" style="left:34px;top:670px;">AxisX Min</div>
<div class="t" style="left:158px;top:670px;">0</div>
<div class="a" style="left:30px;top:700px;width:264px;height:1px;background:#f0f0f0"></div>
<div class="a" style="left:154px;top:684px;width:1px;height:17px;background:#f0f0f0"></div>
<div class="t" style="left:34px;top:687px;">AxisX Max</div>
<div class="t" style="left:158px;top:687px;">50</div>
<div class="a" style="left:30px;top:717px;width:264px;height:1px;background:#f0f0f0"></div>
<div class="a" style="left:154px;top:701px;width:1px;height:17px;background:#f0f0f0"></div>
<div class="t" style="left:34px;top:704px;">AxisX Increment</div>
<div class="t" style="left:158px;top:704px;">0</div>
<div class="a" style="left:30px;top:734px;width:264px;height:1px;background:#f0f0f0"></div>
<div class="a" style="left:154px;top:718px;width:1px;height:17px;background:#f0f0f0"></div>
<div class="t" style="left:34px;top:721px;">AxisX Log Scale</div>
<div class="t" style="left:158px;top:721px;">False</div>
<div class="a" style="left:30px;top:751px;width:264px;height:1px;background:#f0f0f0"></div>
<div class="a" style="left:154px;top:735px;width:1px;height:17px;background:#f0f0f0"></div>
<div class="t" style="left:34px;top:738px;">AxisY Min</div>
<div class="t" style="left:158px;top:738px;">300</div>
<div class="a" style="left:30px;top:768px;width:264px;height:1px;background:#f0f0f0"></div>
<div class="a" style="left:154px;top:752px;width:1px;height:17px;background:#f0f0f0"></div>
<div class="t" style="left:34px;top:755px;">AxisY Max</div>
<div class="t" style="left:158px;top:755px;">600</div>
<div class="a" style="left:30px;top:785px;width:264px;height:1px;background:#f0f0f0"></div>
<div class="a" style="left:154px;top:769px;width:1px;height:17px;background:#f0f0f0"></div>
<div class="t" style="left:34px;top:772px;">AxisY Increment</div>
<div class="t" style="left:158px;top:772px;">0</div>
<div class="a" style="left:30px;top:802px;width:264px;height:1px;background:#f0f0f0"></div>
<div class="a" style="left:154px;top:786px;width:1px;height:17px;background:#f0f0f0"></div>
<div class="t" style="left:34px;top:789px;">AxisY Log Scale</div>
<div class="t" style="left:158px;top:789px;">False</div>
<div class="a" style="left:294px;top:496px;width:16px;height:307px;background:#f0f0f0"></div>
<svg class="a" style="left:297px;top:501px" width="10" height="8" viewBox="0 0 10 8"><path d="M1.5 6l3.5-4 3.5 4" fill="none" stroke="#444" stroke-width="2"/></svg>
<svg class="a" style="left:297px;top:791px" width="10" height="8" viewBox="0 0 10 8"><path d="M1.5 1.5l3.5 4 3.5-4" fill="none" stroke="#444" stroke-width="2"/></svg>
<div class="a" style="left:294px;top:513px;width:15px;height:133px;background:#cdcdcd"></div>

<!-- document tab -->
<div class="a" style="left:318px;top:83px;width:181px;height:21px;background:#fff29d"></div>
<div class="a" style="left:318px;top:102px;width:882px;height:2px;background:#fff29d"></div>
<svg class="a" style="left:326px;top:85px" width="16" height="16" viewBox="0 0 16 16"><rect x="0.5" y="0.5" width="14" height="14" fill="#fafafa" stroke="#9a9a9a"/><path d="M4 2v11M8 2v11M11 2v11" stroke="#e0e0e0" stroke-width="0.8"/><g transform="translate(0.3 0.5) scale(0.9)"><path d="M2 12l3-5 3 3 5-7" fill="none" stroke="#2a9a2a" stroke-width="1"/><path d="M2 6l4 2 4 4 4-3" fill="none" stroke="#d02020" stroke-width="1"/><circle cx="4" cy="12" r="1.5" fill="#fff" stroke="#1a8a1a"/><circle cx="12" cy="4" r="1.5" fill="#fff" stroke="#1a8a1a"/><circle cx="5" cy="6" r="1.5" fill="#fff" stroke="#d01010"/><circle cx="10" cy="11" r="1.5" fill="#fff" stroke="#d01010"/></g></svg>
<div class="t" style="left:354px;top:86px;color:#000">2D_Al-Mg-Zn.graph*</div>
<svg class="a" style="left:483px;top:87px" width="11" height="11"><path d="M1.5 1.5 L9.5 9.5 M9.5 1.5 L1.5 9.5" stroke="#8a7f55" stroke-width="1.5"/></svg>
<svg class="a" style="left:1185px;top:93px" width="10" height="6"><path d="M0 0 L9 0 L4.5 4.5 Z" fill="#ced4df"/></svg>
<div class="a" style="left:318px;top:104px;width:882px;height:701px;background:#fff;border-left:1px solid #c5cbd8;border-right:1px solid #8d9ab5;border-bottom:1px solid #8d9ab5"></div>
<svg class="a" style="left:0;top:0" width="1206" height="808" viewBox="0 0 1206 808">
<g fill="none" stroke="#0000ff" stroke-width="2.1" stroke-linejoin="round">
<path d="M448.0 396.6 L450.8 396.9 L453.7 397.2 L456.5 397.6 L459.3 398.0 L462.2 398.4 L465.0 398.8 L467.8 399.2 L470.7 399.6 L473.5 400.1 L476.3 400.5 L479.2 401.0 L482.0 401.5 L484.8 402.0 L487.7 402.6 L490.5 403.1 L493.3 403.7 L496.2 404.2 L499.0 404.8 L501.8 405.4 L504.7 406.0 L507.5 406.7 L510.3 407.3 L513.2 407.9 L516.0 408.6 L518.8 409.2 L521.7 409.9 L524.5 410.6 L527.3 411.3 L530.2 411.9 L533.0 412.6 L535.8 413.3 L538.7 414.1 L541.5 414.8 L544.3 415.5 L547.2 416.2 L550.0 417.0 L552.8 417.7 L555.7 418.5 L558.5 419.2"/>
<path d="M448.0 405.9 L449.7 405.7 L451.4 405.5 L453.1 405.3 L454.8 405.1 L456.5 405.0 L458.2 404.9 L459.8 404.8 L461.5 404.7 L463.2 404.7 L464.9 404.7 L466.6 404.7 L468.3 404.8 L470.0 404.9 L471.7 405.0 L473.4 405.1 L475.1 405.3 L476.8 405.5 L478.5 405.7 L480.2 406.0 L481.8 406.3 L483.5 406.6 L485.2 407.0 L486.9 407.4 L488.6 407.8 L490.3 408.3 L492.0 408.7 L493.7 409.3 L495.4 409.8 L497.1 410.4 L498.8 411.0 L500.5 411.7 L502.2 412.4 L503.8 413.1 L505.5 413.9 L507.2 414.7 L508.9 415.5 L510.6 416.4 L512.3 417.3 L514.0 418.2"/>
<path d="M514.0 418.3 L560.7 419.2"/>
<path d="M558.5 419.4 L563.3 419.9 L568.1 420.4 L572.8 421.0 L577.6 421.7 L582.4 422.5 L587.2 423.3 L592.0 424.3 L596.8 425.3 L601.5 426.3 L606.3 427.5 L611.1 428.7 L615.9 430.1 L620.7 431.5 L625.5 433.0 L630.2 434.6 L635.0 436.3 L639.8 438.1 L644.6 440.0 L649.4 442.0 L654.2 444.1 L658.9 446.3 L663.7 448.6 L668.5 451.0 L673.3 453.5 L678.1 456.1 L682.9 458.8 L687.6 461.7 L692.4 464.6 L697.2 467.7 L702.0 470.9 L706.8 474.2 L711.6 477.5 L716.3 481.1 L721.1 484.7 L725.9 488.4 L730.7 492.2 L735.5 496.2 L740.3 500.2 L745.0 504.4 L749.8 508.6 L754.6 513.0 L759.4 517.4 L764.2 522.0 L769.0 526.6 L773.7 531.3 L778.5 536.1 L783.3 540.9 L788.1 545.9 L792.9 550.9 L797.7 556.0 L802.4 561.1 L807.2 566.2 L812.0 571.5 L816.8 576.7 L821.6 582.0 L826.4 587.2 L831.1 592.5 L835.9 597.8 L840.7 603.1"/>
<path d="M514.0 418.5 L518.3 419.1 L522.6 419.8 L526.9 420.6 L531.2 421.4 L535.5 422.4 L539.8 423.4 L544.1 424.5 L548.4 425.8 L552.7 427.1 L557.0 428.5 L561.3 430.0 L565.6 431.7 L569.9 433.4 L574.2 435.2 L578.4 437.2 L582.7 439.2 L587.0 441.4 L591.3 443.6 L595.6 446.0 L599.9 448.4 L604.2 450.9 L608.5 453.6 L612.8 456.3 L617.1 459.2 L621.4 462.1 L625.7 465.1 L630.0 468.2 L634.3 471.4 L638.6 474.7 L642.9 478.0 L647.2 481.5 L651.5 485.0 L655.8 488.6 L660.1 492.3 L664.4 496.1 L668.7 499.9 L673.0 503.8 L677.3 507.7 L681.6 511.7 L685.9 515.8 L690.2 520.0 L694.5 524.2 L698.8 528.4 L703.1 532.7 L707.3 537.1 L711.6 541.5 L715.9 546.0 L720.2 550.5 L724.5 555.1 L728.8 559.7 L733.1 564.3 L737.4 569.0 L741.7 573.8 L746.0 578.5 L750.3 583.4 L754.6 588.2 L758.9 593.1 L763.2 598.1 L767.5 603.1"/>
<path d="M514.0 418.3 L490.8 599.2"/>
<path d="M448.0 525.5 L490.8 599.2"/>
<path d="M453.8 535.5 L454.5 539.7 L455.2 543.9 L455.9 548.2 L456.6 552.4 L457.2 556.6 L457.8 560.8 L458.4 565.0 L458.9 569.2 L459.4 573.5 L459.9 577.7 L460.3 581.9 L460.8 586.1 L461.1 590.3 L461.5 594.6 L461.8 598.8 L462.1 603.0 L462.4 607.2 L462.6 611.4 L462.8 615.6 L462.9 619.9 L463.1 624.1 L463.2 628.3 L463.2 632.5 L463.3 636.7 L463.3 640.9 L463.2 645.2 L463.1 649.4 L463.0 653.6 L462.9 657.8 L462.7 662.0 L462.5 666.3 L462.3 670.5 L462.0 674.7 L461.7 678.9 L461.3 683.1 L460.9 687.3 L460.5 691.6 L460.0 695.8 L459.5 700.0"/>
<path d="M490.8 599.2 L486.8 700.0"/>
<path d="M490.8 599.2 L497.7 700.0"/>
<path d="M558.5 419.2 L564.1 416.5 L569.6 413.8 L575.2 411.2 L580.8 408.6 L586.3 406.1 L591.9 403.6 L597.5 401.2 L603.1 398.8 L608.6 396.5 L614.2 394.2 L619.8 391.9 L625.3 389.7 L630.9 387.6 L636.5 385.5 L642.0 383.4 L647.6 381.4 L653.2 379.4 L658.8 377.5 L664.3 375.6 L669.9 373.7 L675.5 371.9 L681.0 370.1 L686.6 368.4 L692.2 366.7 L697.7 365.0 L703.3 363.4 L708.9 361.8 L714.4 360.2 L720.0 358.7 L725.6 357.2 L731.2 355.7 L736.7 354.3 L742.3 352.9 L747.9 351.5 L753.4 350.2 L759.0 348.9 L764.6 347.6 L770.1 346.3 L775.7 345.1 L781.3 343.8 L786.9 342.7 L792.4 341.5 L798.0 340.4 L803.6 339.2 L809.1 338.1 L814.7 337.1 L820.3 336.0 L825.8 335.0 L831.4 334.0 L837.0 333.0 L842.6 332.1 L848.1 331.2 L853.7 330.3 L859.3 329.4 L864.8 328.5 L870.4 327.7 L876.0 326.9 L881.5 326.1 L887.1 325.4 L892.7 324.7 L898.2 324.0 L903.8 323.3 L909.4 322.7 L915.0 322.1 L920.5 321.6 L926.1 321.0 L931.7 320.5 L937.2 320.1 L942.8 319.7 L948.4 319.3 L953.9 319.0 L959.5 318.7 L965.1 318.5 L970.7 318.4 L976.2 318.2 L981.8 318.2 L987.4 318.2 L992.9 318.3 L998.5 318.4"/>
<path d="M998.5 318.4 L1002.6 316.2 L1006.7 314.0 L1010.8 311.9 L1015.0 309.8 L1019.1 307.7 L1023.2 305.6 L1027.3 303.6 L1031.4 301.5 L1035.5 299.6 L1039.7 297.6 L1043.8 295.7 L1047.9 293.8 L1052.0 291.9 L1056.1 290.1 L1060.2 288.3 L1064.3 286.5 L1068.5 284.7 L1072.6 283.0 L1076.7 281.3 L1080.8 279.6 L1084.9 278.0 L1089.0 276.3 L1093.2 274.8 L1097.3 273.2 L1101.4 271.7 L1105.5 270.1 L1109.6 268.7 L1113.7 267.2 L1117.8 265.8 L1122.0 264.4 L1126.1 263.0 L1130.2 261.7 L1134.3 260.4 L1138.4 259.1 L1142.5 257.8 L1146.7 256.6 L1150.8 255.4 L1154.9 254.2 L1159.0 253.1"/>
<path d="M998.3 318.3 L1000.1 321.6 L1001.8 325.0 L1003.4 328.3 L1005.0 331.6 L1006.6 335.0 L1008.1 338.3 L1009.5 341.6 L1010.9 344.9 L1012.2 348.3 L1013.5 351.6 L1014.7 354.9 L1016.0 358.3 L1017.1 361.6 L1018.3 364.9 L1019.4 368.3 L1020.4 371.6 L1021.5 374.9 L1022.5 378.3 L1023.5 381.6 L1024.5 384.9 L1025.4 388.2 L1026.4 391.6 L1027.3 394.9 L1028.2 398.2 L1029.1 401.6 L1030.0 404.9 L1030.9 408.2 L1031.8 411.6 L1032.6 414.9 L1033.5 418.2 L1034.4 421.6 L1035.3 424.9 L1036.2 428.2 L1037.1 431.5 L1038.0 434.9 L1039.0 438.2 L1039.9 441.5 L1040.9 444.9 L1041.9 448.2"/>
<path d="M998.5 318.6 L1003.5 321.9 L1008.3 325.2 L1012.9 328.6 L1017.2 331.9 L1021.4 335.2 L1025.4 338.5 L1029.3 341.9 L1032.9 345.2 L1036.4 348.5 L1039.7 351.8 L1042.9 355.2 L1045.9 358.5 L1048.7 361.8 L1051.4 365.1 L1054.0 368.4 L1056.5 371.8 L1058.8 375.1 L1061.1 378.4 L1063.2 381.7 L1065.2 385.1 L1067.1 388.4 L1068.9 391.7 L1070.6 395.0 L1072.3 398.4 L1073.9 401.7 L1075.4 405.0 L1076.8 408.3 L1078.2 411.6 L1079.6 415.0 L1080.9 418.3 L1082.1 421.6 L1083.3 424.9 L1084.5 428.3 L1085.7 431.6 L1086.9 434.9 L1088.0 438.2 L1089.2 441.6 L1090.3 444.9 L1091.5 448.2"/>
<path d="M1042.0 448.2 L1091.5 448.2"/>
<path d="M1091.7 448.2 L1159.0 481.6"/>
<path d="M1085.6 449.3 L1159.0 482.8"/>
<path d="M1042.0 448.2 L1019.0 600.0"/>
<path d="M1084.8 448.2 L1088.0 600.0"/>
<path d="M1019.0 600.0 L1088.0 600.0"/>
<path d="M1088.0 600.0 L1160.0 612.0"/>
<path d="M1019.0 600.0 L993.0 631.0"/>
<path d="M1088.0 600.0 L1074.0 631.0"/>
<path d="M980.3 631.5 L1074.0 631.3"/>
<path d="M1074.0 631.0 L1160.0 627.0"/>
<path d="M981.0 631.0 L963.5 700.0"/>
<path d="M1074.0 631.0 L1066.7 700.0"/>
<path d="M840.7 603.2 L992.6 630.9"/>
<path d="M836.0 603.6 L980.3 631.6"/>
<path d="M767.5 603.3 L840.7 603.3"/>
<path d="M767.5 603.0 L751.6 700.0"/>
<path d="M829.4 603.0 L831.3 700.0"/>
</g>
<rect x="446.5" y="136.5" width="713" height="564" fill="none" stroke="#000" stroke-width="3" stroke-linejoin="round"/>
<path d="M437 136.5 L446.5 136.5 M437 230.5 L446.5 230.5 M437 324.5 L446.5 324.5 M437 418.5 L446.5 418.5 M437 512.5 L446.5 512.5 M437 606.5 L446.5 606.5 M437 700.5 L446.5 700.5 M446.5 700.5 L446.5 708 M589.1 700.5 L589.1 708 M731.7 700.5 L731.7 708 M874.3 700.5 L874.3 708 M1016.9 700.5 L1016.9 708 M1159.5 700.5 L1159.5 708" stroke="#000" stroke-width="3"/>
<g font-family="Liberation Sans" font-size="19" fill="#000">
<text x="433.5" y="141.5" text-anchor="end">600</text>
<text x="433.5" y="235.5" text-anchor="end">550</text>
<text x="433.5" y="329.5" text-anchor="end">500</text>
<text x="433.5" y="423.5" text-anchor="end">450</text>
<text x="433.5" y="517.5" text-anchor="end">400</text>
<text x="433.5" y="611.5" text-anchor="end">350</text>
<text x="433.5" y="705.5" text-anchor="end">300</text>
<text x="446.5" y="724" text-anchor="middle">0</text>
<text x="589.1" y="724" text-anchor="middle">10</text>
<text x="731.7" y="724" text-anchor="middle">20</text>
<text x="874.3" y="724" text-anchor="middle">30</text>
<text x="1016.9" y="724" text-anchor="middle">40</text>
<text x="1159.5" y="724" text-anchor="middle">50</text>
</g>
<text x="478" y="192.3" font-family="Liberation Sans" font-size="24.4">x(Mg)=50at.%</text>
<text x="757.8" y="761.8" font-family="Liberation Sans" font-size="28">x%(Zn)</text>
<text transform="translate(384.7 419) rotate(-90)" text-anchor="middle" font-family="Liberation Sans" font-size="28">T[C]</text>
<g fill="#0a90c0"><circle cx="374.4" cy="727.5" r="11.3"/><circle cx="357.8" cy="757.6" r="11.2"/><circle cx="391.2" cy="757.6" r="11.2"/>
<path d="M364 732 L385 732 Q394 739 397 749 L394 768 L355 768 L352 749 Q355 739 364 732 Z"/></g>
<path fill="#fff" fill-rule="evenodd" d="M362.7 737.9 H378.5 C386 737.9 389.7 741.5 389.7 747.3 C389.7 753 386 756.7 378.5 756.7 H374 V762.2 H379.3 V766.1 H362.7 V762.2 H365.4 V742 H362.7 Z M374 741.9 H377 C379.8 741.9 381 744.3 381 747 C381 749.7 379.8 752 377 752 H374 Z"/>
<g transform="translate(8.7 8) scale(0.29) translate(-346.6 -718.5)"><g fill="#0a90c0"><circle cx="374.4" cy="727.5" r="11.3"/><circle cx="357.8" cy="757.6" r="11.2"/><circle cx="391.2" cy="757.6" r="11.2"/>
<path d="M364 732 L385 732 Q394 739 397 749 L394 768 L355 768 L352 749 Q355 739 364 732 Z"/></g>
<path fill="#fff" fill-rule="evenodd" d="M362.7 737.9 H378.5 C386 737.9 389.7 741.5 389.7 747.3 C389.7 753 386 756.7 378.5 756.7 H374 V762.2 H379.3 V766.1 H362.7 V762.2 H365.4 V742 H362.7 Z M374 741.9 H377 C379.8 741.9 381 744.3 381 747 C381 749.7 379.8 752 377 752 H374 Z"/></g>
</svg>
</body></html>
